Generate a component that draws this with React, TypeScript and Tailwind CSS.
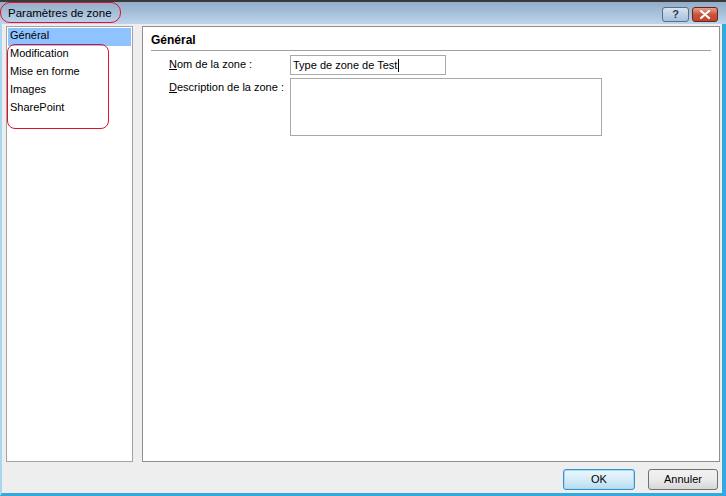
import React from "react";

export default function App() {
  const items = ["Général", "Modification", "Mise en forme", "Images", "SharePoint"];
  return (
    <div className="relative w-[726px] h-[496px] flex flex-col bg-[#eeeeee] font-['Liberation_Sans',Arial,sans-serif] text-[11px] text-black overflow-hidden">
      {/* Title bar */}
      <div className="h-[24px] shrink-0 border-t-2 border-[#3a3a3a] bg-gradient-to-b from-[#92adc8] to-[#bdd4ec] flex items-center pl-[8px] pr-[8px]">
        <span className="text-[11.5px] text-black leading-none mt-[1px]">Paramètres de zone</span>
        <div className="ml-auto flex gap-[3px] items-center mt-[2px]">
          <div className="w-[27px] h-[15px] rounded-[3px] border border-[#5a6e84] bg-gradient-to-b from-[#d6e4f2] to-[#a8c0da] flex items-center justify-center">
            <span className="text-[11px] font-bold text-[#2a3a4a] leading-none">?</span>
          </div>
          <div className="w-[26px] h-[15px] rounded-[3px] border border-[#6b2418] bg-gradient-to-b from-[#e8a08e] via-[#c9533e] to-[#c2452c] flex items-center justify-center">
            <svg width="12" height="9" viewBox="0 0 12 9">
              <path d="M2 1 L10 8 M10 1 L2 8" stroke="#ffffff" strokeWidth="2.2" strokeLinecap="round" />
            </svg>
          </div>
        </div>
      </div>

      {/* Body with frame borders */}
      <div className="flex-1 flex flex-col border-l-2 border-l-[#a9d6f0] border-r-[4px] border-r-[#33a9e0] border-b-[3px] border-b-[#33a9e0]">
        <div className="flex-1 flex flex-col pr-[2px]">
          <div className="flex pt-[2px] pl-[4px] gap-[9px] h-[438px]">
            {/* Left panel */}
            <div className="w-[127px] h-full border border-[#a3a3a3] bg-white px-[1px] pt-[1px] flex flex-col">
              {items.map((it, i) => (
                <div
                  key={it}
                  className={`h-[18px] flex items-center pl-[2px] pb-[3px] ${i === 0 ? "bg-[#8fc3ff]" : ""}`}
                >
                  {it}
                </div>
              ))}
            </div>
            {/* Right panel */}
            <div className="flex-1 h-full border border-[#8f8f8f] bg-white pl-[8px] pr-[8px] pt-[6px]">
              <div className="font-bold text-[12px] leading-[14px] pb-[3px] border-b border-[#a0a0a0]">Général</div>
              <div className="flex mt-[4px] pl-[18px] h-[20px] items-start">
                <div className="w-[121px] pt-[1px]">
                  <span className="underline">N</span>om de la zone :
                </div>
                <div className="w-[156px] h-[20px] border border-[#a8a8a8] flex items-center pl-[2px]">
                  <span>Type de zone de Test</span>
                  <span className="w-px h-[13px] bg-black ml-[1px]" />
                </div>
              </div>
              <div className="flex mt-[3px] pl-[18px] items-start">
                <div className="w-[121px] pt-[1px]">
                  <span className="underline">D</span>escription de la zone :
                </div>
                <div className="w-[312px] h-[58px] border border-[#a8a8a8]" />
              </div>
            </div>
          </div>
          {/* Buttons */}
          <div className="flex justify-end gap-[13px] pt-[7px] pr-[2px]">
            <div className="w-[72px] h-[21px] rounded-[3px] border border-[#3c8fc8] shadow-[inset_0_0_0_1px_#9fdcf7] bg-gradient-to-b from-[#ecf6fc] via-[#d6ecf8] to-[#b6dbf0] flex items-center justify-center">
              OK
            </div>
            <div className="w-[70px] h-[21px] rounded-[3px] border border-[#707070] bg-gradient-to-b from-[#f2f2f2] via-[#ebebeb] to-[#d6d6d6] flex items-center justify-center">
              Annuler
            </div>
          </div>
        </div>
      </div>

      {/* Red annotations */}
      <div className="absolute left-0 top-[2px] w-[121px] h-[21px] rounded-[10px] border border-[#e0102a] pointer-events-none" />
      <div className="absolute left-[7px] top-[44px] w-[102px] h-[85px] rounded-[8px] border border-[#e0102a] pointer-events-none" />
    </div>
  );
}
